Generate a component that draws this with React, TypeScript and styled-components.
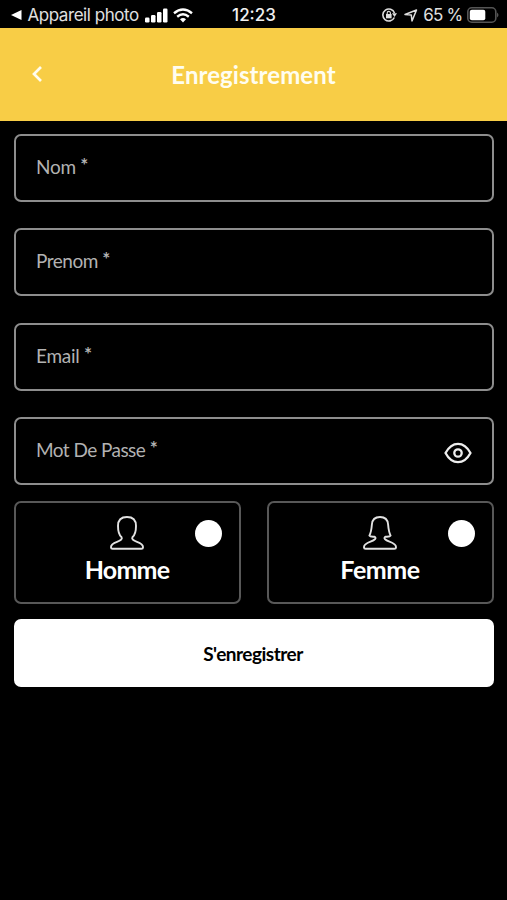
import React from "react";
import styled, { createGlobalStyle } from "styled-components";

const GlobalStyle = createGlobalStyle`
  * { box-sizing: border-box; }
  body { margin: 0; background: #000; }
`;

const Screen = styled.div`
  width: 507px;
  height: 900px;
  overflow: hidden;
  background: #000;
  color: #fff;
  font-family: Lato, sans-serif;
`;

const StatusBar = styled.div`
  height: 28px;
  display: grid;
  grid-template-columns: 1fr auto 1fr;
  align-items: center;
  padding: 2px 8px 0 11px;
  font-family: Inter, sans-serif;
  font-size: 17px;
  line-height: 24px;
  white-space: nowrap;
  color: #e0e0e0;
`;

const StatusGroup = styled.div<{ $end?: boolean }>`
  display: flex;
  align-items: center;
  justify-content: ${(p) => (p.$end ? "flex-end" : "flex-start")};
  svg { flex: none; display: block; }
`;

const StatusText = styled.span<{ $spacing: number; $left: number; $right: number }>`
  letter-spacing: ${(p) => p.$spacing}px;
  margin: 0 ${(p) => p.$right}px 0 ${(p) => p.$left}px;
`;

const SignalIcon = styled.svg`
  margin-right: 5px;
`;

const Clock = styled.span`
  padding-right: 2px;
  font-weight: 500;
  font-size: 17px;
  color: #f0f0f0;
`;

const Header = styled.header`
  height: 93px;
  display: grid;
  grid-template-columns: 75px 1fr 75px;
  align-items: center;
  background: #f8cd46;
`;

const BackButton = styled.button`
  border: 0;
  padding: 0 2px 1px 0;
  width: 75px;
  height: 60px;
  display: flex;
  align-items: center;
  justify-content: center;
  background: none;
`;

const Title = styled.h1`
  margin: 0;
  text-align: center;
  font-size: 24px;
  line-height: 30px;
  font-weight: 700;
  letter-spacing: 0.07px;
  color: #fffdf0;
`;

const Form = styled.form`
  padding: 13.2px 13px 0 14px;
  display: flex;
  flex-direction: column;
`;

const Fields = styled.div`
  display: grid;
  gap: 26.3px;
`;

const Field = styled.label`
  height: 68px;
  padding: 0 20px 0 20px;
  display: flex;
  align-items: center;
  justify-content: space-between;
  border: 2px solid #8d8d8d;
  border-radius: 7px;
`;

const Label = styled.span<{ $spacing: number }>`
  font-size: 19px;
  line-height: 24px;
  padding-bottom: 2px;
  letter-spacing: ${(p) => p.$spacing}px;
  color: #b2b2b2;
  white-space: nowrap;
`;

const Required = styled.span`
  display: inline-block;
  margin-left: 4.5px;
  font-weight: 700;
  line-height: 20px;
  vertical-align: 2px;
`;

const EyeIcon = styled.svg`
  display: block;
  margin-top: 4px;
`;

const Choices = styled.div`
  margin-top: 16px;
  display: grid;
  grid-template-columns: 1fr 1fr;
  gap: 26px;
`;

const Card = styled.div`
  height: 103px;
  position: relative;
  display: flex;
  flex-direction: column;
  align-items: center;
  padding: 13px 1px 0 0;
  border: 2px solid #585858;
  border-radius: 7px;
  svg { display: block; }
`;

const CardLabel = styled.span<{ $spacing: number }>`
  margin-top: 4px;
  font-size: 25px;
  line-height: 30px;
  font-weight: 700;
  letter-spacing: ${(p) => p.$spacing}px;
`;

const Radio = styled.span`
  position: absolute;
  top: 17px;
  right: 17px;
  width: 27px;
  height: 27px;
  border-radius: 50%;
  background: #fff;
`;

const Submit = styled.button`
  margin: 15px 0 0;
  height: 68px;
  padding: 1px 2px 0 0;
  border: 0;
  border-radius: 7px;
  background: #fff;
  color: #000;
  font: 700 19px/24px Lato, sans-serif;
  letter-spacing: -0.5px;
`;

const fields = [
  { text: "Nom", spacing: -0.3 },
  { text: "Prenom", spacing: -0.5 },
  { text: "Email", spacing: -0.25 },
  { text: "Mot De Passe", spacing: -0.55, secret: true },
];

function Eye() {
  return (
    <EyeIcon width="28" height="22" viewBox="0 0 28 22" fill="none" stroke="#eee" strokeWidth="2.3">
      <path d="M1.5 11C5 4.5 9.5 1.8 14 1.8S23 4.500 26.500 11C23 17.500 18.500 20.200 14 20.200S5 17.500 1.500 11Z" strokeLinejoin="round" />
      <circle cx="14" cy="11" r="3.7" />
    </EyeIcon>
  );
}

function ManIcon() {
  return (
    <svg width="34" height="34" viewBox="0 0 34 34" fill="none" stroke="#e2e2e2" strokeWidth="1.9" strokeLinejoin="round">
      <path d="M17 1C11 1 8 4.500 8 10C8 15.500 9 19 11.600 21.300C12.600 23.200 10.500 24.500 7 25.800C3.200 27.200 1 28.300 1 31V31.500Q1 32.800 2.600 32.800H31.400Q33 32.800 33 31.500V31C33 28.300 30.800 27.200 27 25.800C23.500 24.500 21.400 23.200 22.400 21.300C25 19 26 15.500 26 10C26 4.500 23 1 17 1Z" />
    </svg>
  );
}

function WomanIcon() {
  return (
    <svg width="34" height="34" viewBox="0 0 34 34" fill="none" stroke="#e2e2e2" strokeWidth="1.9" strokeLinejoin="round">
      <path d="M17 1C11.700 1 9.200 4.200 8.900 8.500C8.500 13.500 8 16.500 6.400 19.600C7 20.800 9.200 20.600 11.600 20.800C13.800 22.200 12 23.900 7.500 25.700C3.500 27.200 1 28.300 1 31V31.500Q1 32.800 2.600 32.800H31.400Q33 32.800 33 31.500V31C33 28.300 30.500 27.200 26.500 25.700C22 23.900 20.200 22.200 22.400 20.800C24.800 20.600 27 20.800 27.600 19.600C26 16.500 25.500 13.500 25.100 8.500C24.800 4.200 22.300 1 17 1Z" />
    </svg>
  );
}

export default function App() {
  return (
    <>
      <GlobalStyle />
      <Screen>
        <StatusBar>
          <StatusGroup>
            <svg width="11" height="10" viewBox="0 0 11 10" fill="#fff"><path d="M0 5L10.500 0V10Z" /></svg>
            <StatusText $spacing={-0.45} $left={5.5} $right={6}>Appareil photo</StatusText>
            <SignalIcon width="23" height="15" viewBox="0 0 23 15" fill="#fff">
              <rect x="0" y="9.500" width="4.500" height="5" rx="1.200" />
              <rect x="6" y="7" width="4.500" height="7.500" rx="1.200" />
              <rect x="12" y="4" width="4.500" height="10.500" rx="1.200" />
              <rect x="18" y="0.500" width="4.500" height="14" rx="1.200" />
            </SignalIcon>
            <svg width="20" height="15" viewBox="0 0 20 15" fill="none" stroke="#fff" strokeWidth="2.400">
              <path d="M1 5.200Q10 -2.200 19 5.200M4.200 8.700Q10 4 15.800 8.700" />
              <path d="M7 11.300Q10 8.900 13 11.300L10 14.500Z" fill="#fff" stroke="none" />
            </svg>
          </StatusGroup>
          <Clock>12:23</Clock>
          <StatusGroup $end>
            <svg width="15" height="14" viewBox="0 0 15 14" fill="none" stroke="#ddd" strokeWidth="1.600">
              <path d="M12.300 9.500A6 6 0 1 1 12.500 5" />
              <path d="M10 5.300H15L12.500 9Z" fill="#ddd" stroke="none" />
              <rect x="4" y="6" width="5.600" height="4.300" fill="#ddd" stroke="none" />
              <path d="M5.200 6.500V5A1.600 1.600 0 0 1 8.400 5V6.500" strokeWidth="1.100" />
            </svg>
            <svg width="21" height="13" viewBox="-7.500 0 21 13" fill="none" stroke="#ddd" strokeWidth="1.500" strokeLinejoin="round">
              <path d="M0.500 5.500L12 1L7.500 12L6.800 6Z" />
            </svg>
            <StatusText $spacing={-0.75} $left={5} $right={4.5}>65 %</StatusText>
            <svg width="32" height="16" viewBox="0 0 32 16" fill="none">
              <rect x="0.800" y="0.800" width="28" height="14.400" rx="4" stroke="#555" strokeWidth="1.600" />
              <rect x="2.800" y="2.800" width="15.500" height="10.400" rx="2" fill="#fff" />
              <path d="M30 5.500Q33 8 30 10.500Z" fill="#555" />
            </svg>
          </StatusGroup>
        </StatusBar>
        <Header>
          <BackButton aria-label="Retour">
            <svg width="12" height="18" viewBox="0 0 12 18" fill="none" stroke="#fffdf0" strokeWidth="2.700">
              <path d="M10 2L3 9L10 16" />
            </svg>
          </BackButton>
          <Title>Enregistrement</Title>
        </Header>
        <Form>
          <Fields>
            {fields.map((f) => (
              <Field key={f.text}>
                <Label $spacing={f.spacing}>{f.text}<Required>*</Required></Label>
                {f.secret && <Eye />}
              </Field>
            ))}
          </Fields>
          <Choices>
            <Card>
              <ManIcon />
              <CardLabel $spacing={-0.8}>Homme</CardLabel>
              <Radio />
            </Card>
            <Card>
              <WomanIcon />
              <CardLabel $spacing={-0.45}>Femme</CardLabel>
              <Radio />
            </Card>
          </Choices>
          <Submit type="button">S'enregistrer</Submit>
        </Form>
      </Screen>
    </>
  );
}
